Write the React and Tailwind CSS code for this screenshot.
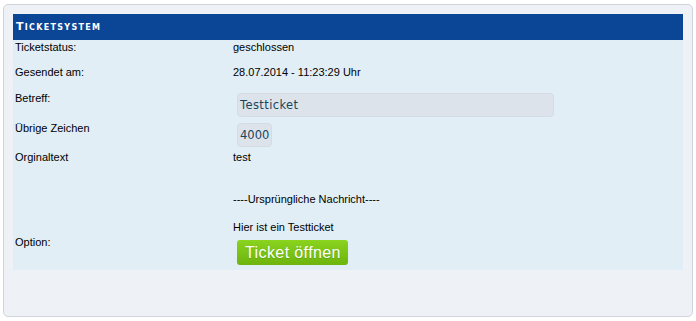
import React from 'react'

// ticket detail box
function Row({ label, children, className = '', labelClass = '' }) {
  return (
    <div className={'flex ' + className}>
      <div className={'w-[220px] pl-[2px] shrink-0 ' + labelClass}>{label}</div>
      <div className="flex-1">{children}</div>
    </div>
  )
}

export default function App() {
  return (
    <div className="w-[696px] h-[321px] bg-white pt-[4px] pl-[3px] font-['Liberation_Sans',Arial,sans-serif] text-[11px] leading-[14px] text-black">
      <div className="w-[690px] h-[313px] border border-[#cfd4da] rounded-[5px] bg-[#eef2f6] p-[9px]">
        <div className="h-[26px] bg-[#0b4696] text-white flex items-center pl-[3px]">
          <span className="font-['DejaVu_Sans',Verdana,sans-serif] font-bold text-[11px] tracking-[1.3px] [font-variant:small-caps]">
            Ticketsystem
          </span>
        </div>
        <div className="bg-[#e1eef5]">
          <Row label="Ticketstatus:" className="h-[25px]">geschlossen</Row>
          <Row label="Gesendet am:" className="h-[25px]">28.07.2014 - 11:23:29 Uhr</Row>
          <Row label="Betreff:" className="h-[30px]" labelClass="pt-[1px]">
            <div className="ml-[4px] mt-[3px] w-[317px] h-[24px] rounded-[4px] bg-[#dde3eb] border border-[#d4dbe3] flex items-center pl-[2px] font-['DejaVu_Sans',Verdana,sans-serif] text-[11.5px] tracking-[0.4px] text-[#17465c]">
              Testticket
            </div>
          </Row>
          <Row label="Übrige Zeichen" className="h-[30px]" labelClass="pt-[1px]">
            <div className="ml-[4px] mt-[3px] w-[35px] h-[24px] rounded-[4px] bg-[#dde3eb] border border-[#d4dbe3] flex items-center pl-[2px] font-['DejaVu_Sans',Verdana,sans-serif] text-[11.5px] text-[#17465c]">
              4000
            </div>
          </Row>
          <Row label="Orginaltext" className="h-[84px]">
            <div>test</div>
            <div className="h-[28px]"></div>
            <div>----Ursprüngliche Nachricht----</div>
            <div className="h-[14px]"></div>
            <div>Hier ist ein Testticket</div>
          </Row>
          <Row label="Option:" className="h-[36px]" labelClass="pt-[1px]">
            <button className="ml-[4px] mt-[6px] w-[111px] h-[25px] rounded-[3px] bg-gradient-to-b from-[#8ad31e] to-[#6db40c] text-white text-[16px] leading-[25px] tracking-[0.4px] text-left pl-[8px] [text-shadow:0_1px_1px_rgba(0,0,0,0.15)]">
              Ticket öffnen
            </button>
          </Row>
        </div>
      </div>
    </div>
  )
}
